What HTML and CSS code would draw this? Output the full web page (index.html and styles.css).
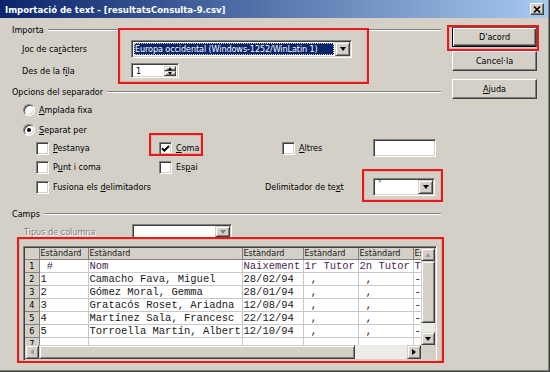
FILE: index.html
```html
<!DOCTYPE html>
<html lang="ca">
<head>
    <meta charset="UTF-8">
    <title>Importació de text</title>
    <link rel="stylesheet" href="styles.css">
</head>
<body>
    <div class="window">
        <div class="titlebar">
            <span class="title">Importació de text - [resultatsConsulta-9.csv]</span>
            <span class="close-btn">
                <svg width="8" height="7" viewBox="0 0 8 7"><path d="M1 0.5L7 6.5M7 0.5L1 6.5" stroke="#000" stroke-width="1.6"/></svg>
            </span>
        </div>

        <div class="content">
            <div class="main">
                <div class="group-title">Importa</div>
                <div class="field-row charset-row">
                    <span class="field-label">Joc de ca<u>r</u>àcters</span>
                    <div class="combo combo-charset">
                        <span class="combo-value selected"><span class="focus">Europa occidental (Windows-1252/WinLatin 1)</span></span>
                        <span class="combo-arrow"></span>
                    </div>
                </div>
                <div class="field-row from-row">
                    <span class="field-label">Des de la f<u>i</u>la</span>
                    <div class="spin">
                        <span class="spin-value">1</span>
                        <span class="spin-buttons">
                            <span class="spin-btn up"></span>
                            <span class="spin-btn down"></span>
                        </span>
                    </div>
                </div>

                <div class="group-title">Opcions del separador</div>
                <div class="radio-row"><span class="radio"></span><span><u>A</u>mplada fixa</span></div>
                <div class="radio-row"><span class="radio checked"></span><span><u>S</u>eparat per</span></div>
                <div class="check-grid">
                    <div class="check"><span class="box"></span><span><u>P</u>estanya</span></div>
                    <div class="check">
                        <span class="box">
                            <svg width="9" height="9" viewBox="0 0 9 9"><path d="M1 4.2l2.4 2.4L8 2" stroke="#000" stroke-width="2" fill="none"/></svg>
                        </span>
                        <span><u>C</u>oma</span>
                    </div>
                    <div class="check"><span class="box"></span><span><u>A</u>ltres</span></div>
                    <span class="text-input"></span>
                    <div class="check"><span class="box"></span><span>P<u>u</u>nt i coma</span></div>
                    <div class="check"><span class="box"></span><span>Es<u>p</u>ai</span></div>
                </div>
                <div class="merge-row">
                    <div class="check merge"><span class="box"></span><span>Fusiona els <u>d</u>elimitadors</span></div>
                    <span class="delim-label">Delimitador de te<u>x</u>t</span>
                    <div class="combo combo-delim">
                        <span class="combo-value">"</span>
                        <span class="combo-arrow"></span>
                    </div>
                </div>

                <div class="group-title">Camps</div>
                <div class="field-row type-row">
                    <span class="field-label disabled">Tipus de columna</span>
                    <div class="combo combo-type">
                        <span class="combo-value"></span>
                        <span class="combo-arrow disabled"></span>
                    </div>
                </div>

                <div class="grid-view">
                    <div class="grid-cells">
                        <table>
                            <colgroup>
                                <col class="c-num"><col class="c1"><col class="c2"><col class="c3"><col class="c4"><col class="c5"><col class="c6">
                            </colgroup>
                            <tr class="head">
                                <th></th><th>Estàndard</th><th>Estàndard</th><th>Estàndard</th><th>Estàndard</th><th>Estàndard</th><th>Estàndard</th>
                            </tr>
                            <tr class="first">
                                <th>1</th><td> #</td><td>Nom</td><td>Naixement</td><td>1r Tutor</td><td>2n Tutor</td><td>Tel</td>
                            </tr>
                            <tr>
                                <th>2</th><td>1</td><td>Camacho Fava, Miguel</td><td>28/02/94</td><td> ,</td><td> ,</td><td>-</td>
                            </tr>
                            <tr>
                                <th>3</th><td>2</td><td>Gómez Moral, Gemma</td><td>28/01/94</td><td> ,</td><td> ,</td><td>-</td>
                            </tr>
                            <tr>
                                <th>4</th><td>3</td><td>Gratacós Roset, Ariadna</td><td>12/08/94</td><td> ,</td><td> ,</td><td>-</td>
                            </tr>
                            <tr>
                                <th>5</th><td>4</td><td>Martínez Sala, Francesc</td><td>22/12/94</td><td> ,</td><td> ,</td><td>-</td>
                            </tr>
                            <tr>
                                <th>6</th><td>5</td><td>Torroella Martín, Albert</td><td>12/10/94</td><td> ,</td><td> ,</td><td>-</td>
                            </tr>
                            <tr>
                                <th>7</th><td></td><td></td><td></td><td></td><td></td><td></td>
                            </tr>
                        </table>
                    </div>
                    <div class="vscroll">
                        <span class="sb-btn arrow-up disabled"></span>
                        <span class="sb-thumb"></span>
                        <span class="sb-track"></span>
                        <span class="sb-btn arrow-down"></span>
                    </div>
                    <div class="hscroll">
                        <span class="sb-btn arrow-left disabled"></span>
                        <span class="sb-thumb"></span>
                        <span class="sb-track"></span>
                        <span class="sb-btn arrow-right"></span>
                    </div>
                    <div class="corner"></div>
                </div>
            </div>

            <div class="side">
                <button class="btn default">D'acord</button>
                <button class="btn">Cancel·la</button>
                <button class="btn help"><u>A</u>juda</button>
            </div>
        </div>

        <!-- red annotation frames drawn over the dialog -->
        <div class="mark mark-import"></div>
        <div class="mark mark-coma"></div>
        <div class="mark mark-delim"></div>
        <div class="mark mark-ok"></div>
        <div class="mark mark-grid"></div>
    </div>
</body>
</html>
```

FILE: styles.css
```css
body {
    margin: 0;
    background: #d4d0c8;
    font-family: "DejaVu Sans Condensed", "DejaVu Sans", "Liberation Sans", sans-serif;
    font-stretch: condensed;
    font-size: 9px;
    color: #000;
}
u {
    text-decoration: underline;
    text-underline-offset: 1px;
}
.window {
    position: relative;
    width: 550px;
    height: 372px;
    background: #d4d0c8;
    box-shadow: inset -1px -1px #404040, inset -2px -2px #808080;
    overflow: hidden;
}
.titlebar {
    height: 18px;
    margin-right: 2px;
    background: linear-gradient(to right, #0a246a, #a6caf0);
    display: flex;
    align-items: center;
    justify-content: space-between;
    padding: 0 4px 0 5px;
}
.title {
    color: #fff;
    font-weight: bold;
    font-size: 9.5px;
}
.close-btn {
    width: 12px;
    height: 10px;
    background: #d4d0c8;
    border: 1px solid;
    border-color: #fff #404040 #404040 #fff;
    box-shadow: inset -1px -1px #808080;
    display: flex;
    align-items: center;
    justify-content: center;
}

.content {
    display: flex;
    padding: 0 0 0 12px;
}
.main {
    width: 429px;
    padding-top: 5px;
}
.side {
    width: 85px;
    margin-left: 11px;
    padding-top: 9px;
    display: flex;
    flex-direction: column;
}

/* frame titles with the etched line */
.group-title {
    height: 14px;
    display: flex;
    align-items: center;
    gap: 4px;
}
.group-title::after {
    content: "";
    flex: 1;
    height: 1px;
    background: #808080;
    border-bottom: 1px solid #fff;
}
.group-title + .field-row { margin-top: 3px; }
.radio-row + .group-title, .merge-row + .group-title { margin-top: 11px; }
.from-row + .group-title { margin-top: 7px; }

.field-row {
    display: flex;
    align-items: center;
    padding-left: 10px;
}
.field-label {
    width: 109px;
}
.field-label.disabled {
    color: #808080;
    text-shadow: 1px 1px #fff;
    padding-left: 2px;
    width: 108px;
}
.from-row { margin-top: 5px; }
.type-row { margin-top: 3px; }

/* sunken fields */
.combo, .spin, .text-input, .grid-view {
    box-sizing: border-box;
    background: #fff;
    border: 1px solid;
    border-color: #808080 #fff #fff #808080;
    box-shadow: inset 1px 1px #404040, inset -1px -1px #d4d0c8;
}
.combo {
    display: flex;
    align-items: stretch;
    height: 18px;
    padding: 1px;
}
.combo-charset { width: 221px; }
.combo-delim { width: 62px; }
.combo-type { width: 100px; height: 15px; }
.combo-value {
    flex: 1;
    display: flex;
    align-items: center;
    padding-left: 1px;
    overflow: hidden;
    white-space: nowrap;
}
.combo-delim .combo-value {
    align-items: flex-start;
    padding-left: 3px;
    font-size: 8px;
    color: #406080;
}
.combo-value.selected {
    background: #0a246a;
    color: #fff;
    margin: 1px;
    padding: 0;
}
.focus {
    display: block;
    width: 100%;
    outline: 1px dotted #d4d0c8;
    outline-offset: -1px;
    padding: 1px 1px;
    letter-spacing: -0.1px;
}
.combo-arrow, .spin-btn, .sb-btn, .sb-thumb, .btn {
    box-sizing: border-box;
    background: #d4d0c8;
    border: 1px solid;
    border-color: #d4d0c8 #404040 #404040 #d4d0c8;
    box-shadow: inset 1px 1px #fff, inset -1px -1px #808080;
}
.combo-arrow {
    width: 15px;
    display: flex;
    align-items: center;
    justify-content: center;
}
.combo-arrow::after, .arrow-down::after {
    content: "";
    border-left: 3.5px solid transparent;
    border-right: 3.5px solid transparent;
    border-top: 4px solid #000;
}
.combo-arrow.disabled::after {
    border-top-color: #808080;
}

.spin {
    width: 48px;
    height: 15px;
    display: flex;
    padding: 2px;
}
.spin-value {
    flex: 1;
    padding-left: 2px;
    line-height: 11px;
}
.spin-buttons {
    width: 12px;
    display: flex;
    flex-direction: column;
}
.spin-btn {
    flex: 1;
    display: flex;
    align-items: center;
    justify-content: center;
}
.spin-btn.up::after {
    content: "";
    border-left: 2.5px solid transparent;
    border-right: 2.5px solid transparent;
    border-bottom: 3px solid #000;
}
.spin-btn.down::after {
    content: "";
    border-left: 2.5px solid transparent;
    border-right: 2.5px solid transparent;
    border-top: 3px solid #000;
}

/* radios and checkboxes */
.radio-row {
    height: 16px;
    display: flex;
    align-items: center;
    gap: 4px;
    padding-left: 11px;
    margin-top: 3px;
}
.radio-row + .radio-row { margin-top: 4px; }
.radio {
    position: relative;
    box-sizing: border-box;
    width: 12px;
    height: 12px;
    border-radius: 50%;
    background: #fff;
    border: 1px solid;
    border-color: #808080 #fff #fff #808080;
    box-shadow: inset 1px 1px #404040, inset -1px -1px #d4d0c8;
}
.radio.checked::after {
    content: "";
    position: absolute;
    left: 3px;
    top: 3px;
    width: 4px;
    height: 4px;
    border-radius: 50%;
    background: #000;
}
.check-grid {
    display: grid;
    grid-template-columns: 123px 123px 91px 63px;
    grid-template-rows: 18px 16px;
    row-gap: 2px;
    align-items: center;
    margin: 1px 0 0 24px;
}
.check {
    display: flex;
    align-items: center;
    gap: 4px;
}
.box {
    box-sizing: border-box;
    width: 13px;
    height: 13px;
    background: #fff;
    border: 1px solid;
    border-color: #808080 #fff #fff #808080;
    box-shadow: inset 1px 1px #404040, inset -1px -1px #d4d0c8;
    display: flex;
    align-items: center;
    justify-content: center;
}
.text-input {
    height: 18px;
}
.merge-row {
    display: flex;
    align-items: center;
    height: 18px;
    margin: 3px 0 0 24px;
}
.merge {
    width: 229px;
}
.delim-label {
    width: 108px;
}

/* data preview grid */
.grid-view {
    display: grid;
    grid-template-columns: 396px 14px;
    grid-template-rows: 97px 14px;
    width: 414px;
    height: 115px;
    margin: 7px 0 0 11px;
    padding: 1px;
}
.grid-cells {
    overflow: hidden;
    background: #fff;
}
table {
    border-collapse: collapse;
    table-layout: fixed;
    width: 448px;
}
col.c-num { width: 14px; }
col.c1 { width: 49px; }
col.c2 { width: 154px; }
col.c3 { width: 61px; }
col.c4 { width: 55px; }
col.c5 { width: 55px; }
col.c6 { width: 60px; }
th, td {
    padding: 0 0 0 1px;
    height: 12px;
    border-right: 1px solid #c8c8c8;
    border-bottom: 1px solid #c8c8c8;
    white-space: pre;
    overflow: hidden;
    text-align: left;
    font-weight: normal;
    line-height: 12px;
}
td {
    font-family: "Liberation Mono", monospace;
    font-size: 10.5px;
    color: #202020;
}
th {
    background: #d4d0c8;
    border-color: #808080;
}
tr th:first-child {
    text-align: center;
    padding: 0;
}
.head th {
    height: 11px;
    line-height: 11px;
    color: #202020;
}
.first td {
    color: #4a2850;
}

.vscroll, .hscroll {
    display: flex;
    background: #ecebe6;
}
.vscroll {
    flex-direction: column;
}
.vscroll .sb-btn { height: 13px; }
.vscroll .sb-thumb { height: 62px; }
.vscroll .sb-track { flex: 1; }
.hscroll .sb-btn { width: 14px; }
.hscroll .sb-thumb { width: 316px; }
.hscroll .sb-track { flex: 1; }
.corner {
    background: #d4d0c8;
}
.sb-btn {
    display: flex;
    align-items: center;
    justify-content: center;
}
.arrow-up::after {
    content: "";
    border-left: 3.5px solid transparent;
    border-right: 3.5px solid transparent;
    border-bottom: 4px solid #000;
}
.arrow-left::after {
    content: "";
    border-top: 3.5px solid transparent;
    border-bottom: 3.5px solid transparent;
    border-right: 4px solid #000;
}
.arrow-right::after {
    content: "";
    border-top: 3.5px solid transparent;
    border-bottom: 3.5px solid transparent;
    border-left: 4px solid #000;
}
.arrow-up.disabled::after { border-bottom-color: #a0a0a0; }
.arrow-left.disabled::after { border-right-color: #a0a0a0; }

/* dialog buttons */
.btn {
    height: 20px;
    padding: 0;
    font: inherit;
    font-stretch: condensed;
    color: #000;
    border-color: #fff #404040 #404040 #fff;
    box-shadow: inset -1px -1px #808080;
}
.btn + .btn { margin-top: 4px; }
.btn.help { margin-top: 8px; }
.btn.default {
    border-color: #000;
    box-shadow: inset 1px 1px #fff, inset -1px -1px #404040, inset -2px -2px #808080;
}

/* red annotation frames */
.mark {
    position: absolute;
    box-sizing: border-box;
    border: 2px solid #e01c1c;
    box-shadow: inset 0 0 0 1px rgba(240, 140, 140, 0.5);
}
.mark-import { left: 118px; top: 28px; width: 251px; height: 56px; }
.mark-coma { left: 149px; top: 133px; width: 54px; height: 23px; }
.mark-delim { left: 362px; top: 169px; width: 81px; height: 33px; }
.mark-ok { left: 447px; top: 25px; width: 92px; height: 26px; }
.mark-grid { left: 17px; top: 237px; width: 427px; height: 126px; }
```
